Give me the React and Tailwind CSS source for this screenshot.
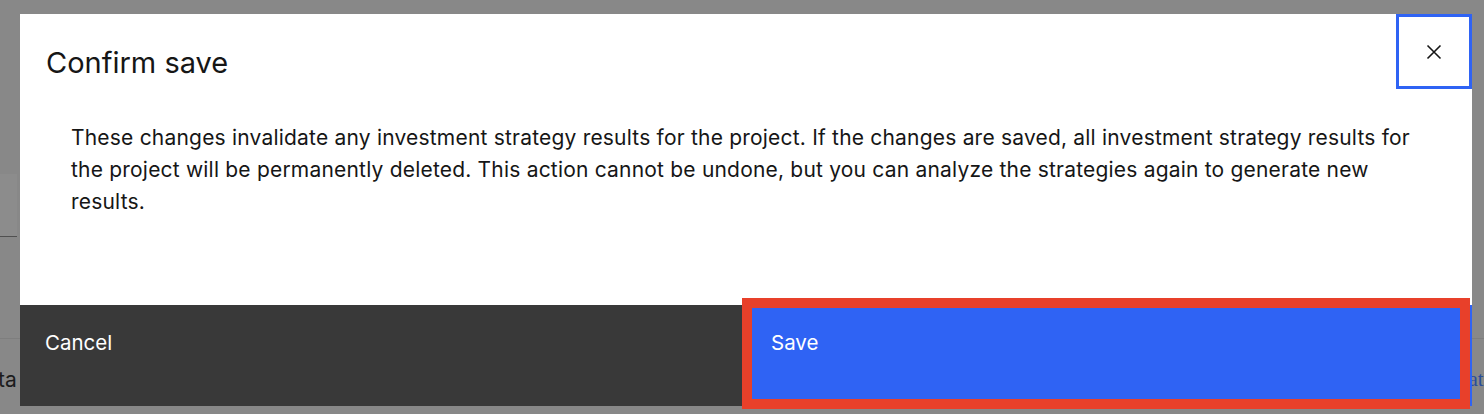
import React from "react";

const lines = [
  "These changes invalidate any investment strategy results for the project. If the changes are saved, all investment strategy results for",
  "the project will be permanently deleted. This action cannot be undone, but you can analyze the strategies again to generate new",
  "results.",
];

const CloseIcon = () => (
  <svg width="16" height="16" viewBox="0 0 16 16" fill="none">
    <path d="M1.5 1.5L14.5 14.5M14.5 1.5L1.5 14.5" stroke="#161616" strokeWidth="1.6" />
  </svg>
);

export default function App() {
  return (
    <div className="relative w-[1484px] h-[414px] overflow-hidden bg-[#888888] font-['Inter',sans-serif]">
      {/* page underneath the overlay */}
      <div className="h-[174px]" />
      <div className="h-[63px] w-[17px] bg-[#8c8c8c] border-b border-[#505050]" />
      <div className="h-[101px]" />
      <div className="border-t border-[#7e7e7e]" />
      <div className="flex justify-between pt-[30px] text-[21px] leading-none text-[#1c1c1c] whitespace-nowrap">
        <span className="-ml-[2px]">ta types and other values for the project</span>
        <span className="text-[#2a4d9a] font-['Liberation_Serif',serif] mr-[-9px]">Update</span>
      </div>

      {/* modal */}
      <div className="absolute left-[20px] top-[14px] w-[1452px] h-[392px] bg-white flex flex-col">
        <div className="flex justify-between">
          <h2 className="pl-[26px] pt-[31px] text-[29px] leading-[36px] text-[#161616] font-normal">
            Confirm save
          </h2>
          <button className="w-[76px] h-[75px] border-[3px] border-[#2f63f4] flex items-center justify-center">
            <CloseIcon />
          </button>
        </div>
        <div className="pl-[51px] pt-[33px] text-[21px] tracking-[0.2px] leading-[32px] text-[#161616]">
          {lines.map((l) => (
            <p key={l} className="whitespace-nowrap">{l}</p>
          ))}
        </div>
        <div className="mt-auto flex h-[101px] text-[20.5px] text-white">
          <button className="w-[722px] bg-[#393939] text-left pl-[25px] pb-[24px]">Cancel</button>
          <button className="flex-1 bg-[#2f63f4] text-left pl-[29px] pb-[24px]">Save</button>
        </div>
      </div>

      {/* highlight frame */}
      <div className="absolute left-[742px] top-[298px] w-[728px] h-[111px] border-[10px] border-[#e8402a]" />
    </div>
  );
}
